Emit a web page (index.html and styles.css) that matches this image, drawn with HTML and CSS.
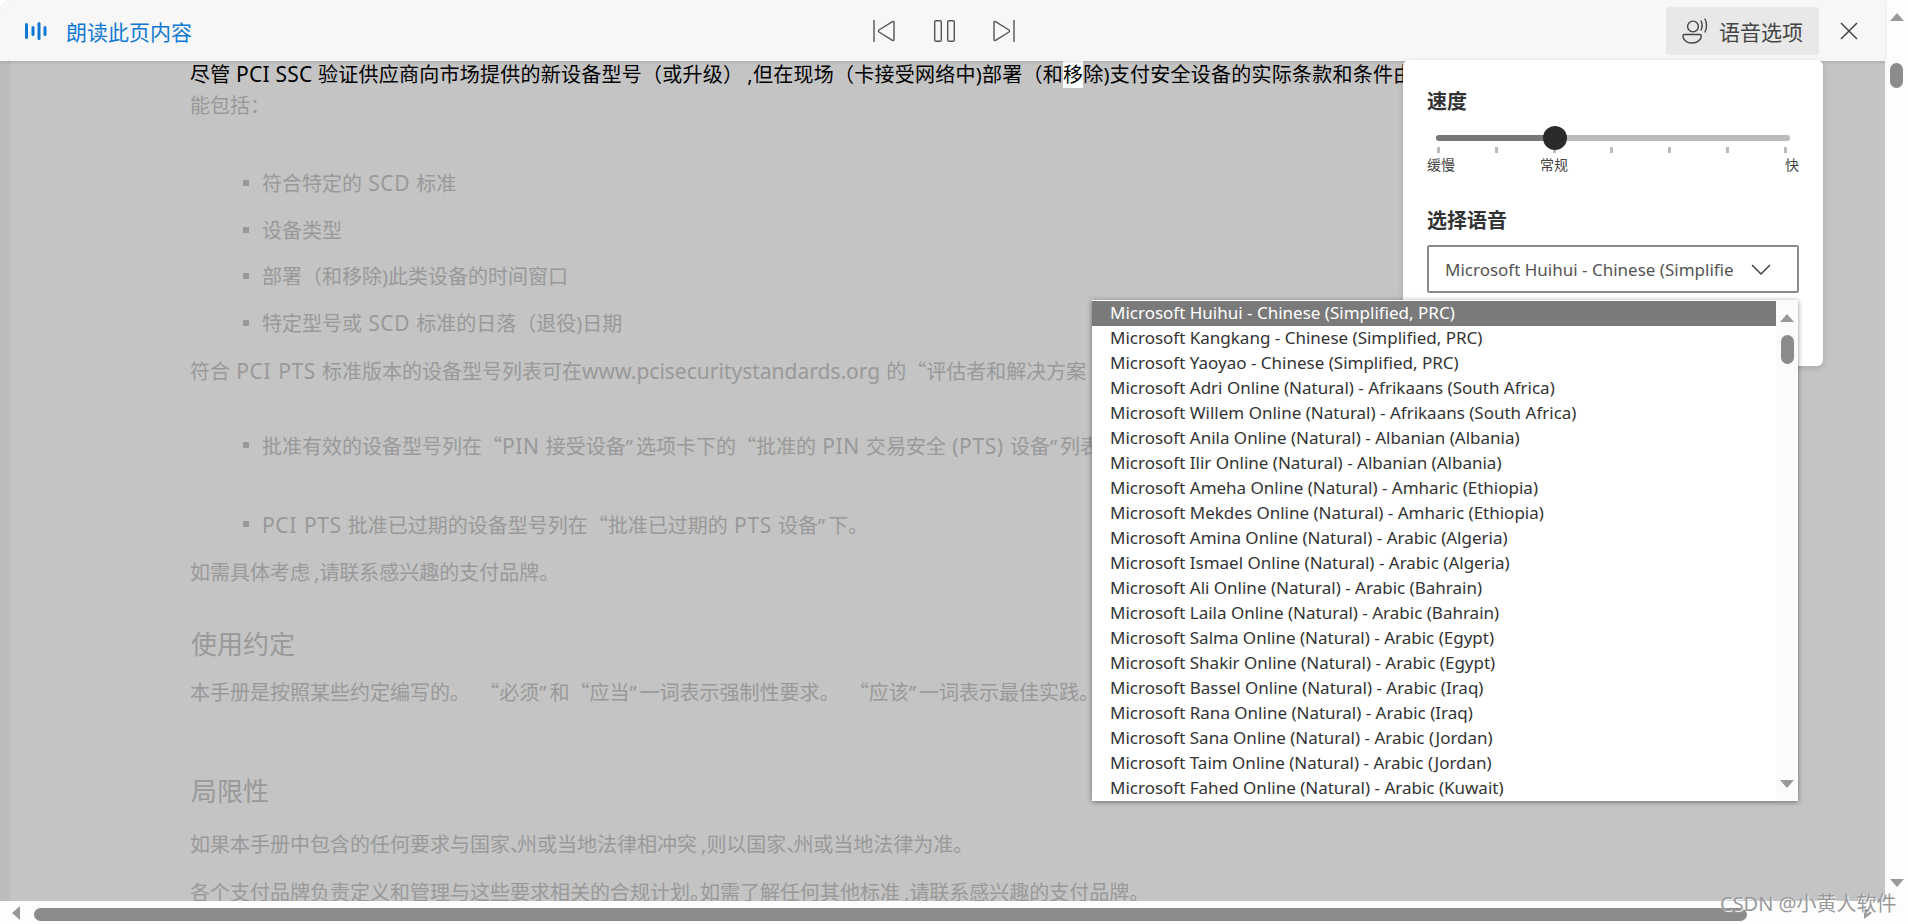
FILE: index.html
```html
<!DOCTYPE html>
<html lang="zh-CN">
<head>
  <meta charset="UTF-8">
  <meta name="viewport" content="width=device-width, initial-scale=1.0">
  <title>朗读此页内容</title>
  <link rel="stylesheet" href="styles.css">
</head>
<body>
  <div class="window">
    <div class="main">
      <header class="toolbar">
        <div class="read-title">
          <svg class="wave-icon" width="22" height="18" viewBox="0 0 22 18">
            <path d="M1.500 2.500v13M8 5.500v7M14 1.500v15M20 5.500v7" fill="none" stroke="#0f78d4" stroke-width="3" stroke-linecap="round"/>
          </svg>
          <span>朗读此页内容</span>
        </div>
        <div class="player">
          <svg width="24" height="24" viewBox="0 0 24 24">
            <path d="M2 1v22M22 3.500v17a1 1 0 0 1-1.600.8L7 13a1.200 1.200 0 0 1 0-2l13.400-8.300a1 1 0 0 1 1.600.8z" fill="none" stroke="#555" stroke-width="1.400"/>
          </svg>
          <svg width="24" height="24" viewBox="0 0 24 24">
            <rect x="2.700" y="1.700" width="6.600" height="20.600" rx="1.400" fill="none" stroke="#555" stroke-width="1.400"/>
            <rect x="15.700" y="1.700" width="6.600" height="20.600" rx="1.400" fill="none" stroke="#555" stroke-width="1.400"/>
          </svg>
          <svg width="24" height="24" viewBox="0 0 24 24">
            <path d="M22 1v22M2 3.500v17a1 1 0 0 0 1.600.8L17 13a1.200 1.200 0 0 0 0-2L3.600 2.700A1 1 0 0 0 2 3.500z" fill="none" stroke="#555" stroke-width="1.400"/>
          </svg>
        </div>
        <div class="tool-right">
          <button class="voice-btn">
            <svg width="26" height="26" viewBox="0 0 26 26">
              <circle cx="11" cy="8.500" r="5.400" fill="none" stroke="#444" stroke-width="1.400"/>
              <path d="M2.500 16.500h15c1 0 1.800.6 1.800 1.500 0 3.800-3.800 7-9.300 7S.9 21.800.9 18c0-.9.600-1.500 1.600-1.500z" fill="none" stroke="#444" stroke-width="1.400"/>
              <path d="M19 3c1.400 2.700 1.400 6.300 0 9M23 1c2 3.700 2 9.300 0 13" fill="none" stroke="#444" stroke-width="1.400" stroke-linecap="round"/>
            </svg>
            <span>语音选项</span>
          </button>
          <svg class="close-icon" width="18" height="18" viewBox="0 0 18 18">
            <path d="M1 1l16 16M17 1L1 17" fill="none" stroke="#444" stroke-width="1.500"/>
          </svg>
        </div>
      </header>

      <div class="page">
        <div class="strip"></div>
        <div class="doc">
          <p class="intro"><span class="reading">尽管 <span class="lat">PCI SSC</span> 验证供应商向市场提供的新设备型号（或升级）<span class="comma">,</span>但在现场（卡接受网络中)部署（和<span class="word">移</span>除)支付安全设备的实际条款和条件由</span><br>能包括：</p>
          <ul class="terms">
            <li>符合特定的 <span class="lat caps">SCD</span> 标准</li>
            <li>设备类型</li>
            <li>部署（和移除)此类设备的时间窗口</li>
            <li>特定型号或 <span class="lat caps">SCD</span> 标准的日落（退役)日期</li>
          </ul>
          <p>符合 <span class="lat caps">PCI PTS</span> 标准版本的设备型号列表可在<span class="lat">www.pcisecuritystandards.org</span> 的<span class="q">“</span>评估者和解决方案</p>
          <ul class="terms single first-single">
            <li>批准有效的设备型号列在<span class="q">“</span><span class="lat caps">PIN</span> 接受设备<span class="rq">”</span>选项卡下的<span class="q">“</span>批准的 <span class="lat caps">PIN</span> 交易安全 <span class="lat caps">(PTS)</span> 设备<span class="rq">”</span>列表</li>
          </ul>
          <ul class="terms single">
            <li><span class="lat caps">PCI PTS</span> 批准已过期的设备型号列在<span class="q">“</span>批准已过期的 <span class="lat caps">PTS</span> 设备<span class="rq">”</span>下。</li>
          </ul>
          <p>如需具体考虑<span class="comma">,</span>请联系感兴趣的支付品牌。</p>
          <h2>使用约定</h2>
          <p class="conv">本手册是按照某些约定编写的。 <span class="q">“</span>必须<span class="rq">”</span>和<span class="q">“</span>应当<span class="rq">”</span>一词表示强制性要求。 <span class="q">“</span>应该<span class="rq">”</span>一词表示最佳实践。</p>
          <h2 class="second">局限性</h2>
          <p>如果本手册中包含的任何要求与国家<span class="half dun">、</span>州或当地法律相冲突<span class="comma">,</span>则以国家<span class="half dun">、</span>州或当地法律为准。</p>
          <p>各个支付品牌负责定义和管理与这些要求相关的合规计划<span class="half">。</span>如需了解任何其他标准<span class="comma">,</span>请联系感兴趣的支付品牌。</p>
        </div>
      </div>

      <div class="hscroll">
        <span class="arrow-left"></span>
        <span class="hthumb"></span>
        <span class="arrow-right"></span>
      </div>
    </div>

    <div class="vscroll">
      <span class="arrow-up"></span>
      <span class="vthumb"></span>
      <span class="arrow-down"></span>
    </div>
  </div>

  <section class="voice-panel">
    <h3>速度</h3>
    <div class="slider">
      <div class="track"><span class="track-fill"></span></div>
      <span class="thumb"></span>
      <div class="ticks"><i></i><i></i><i></i><i></i><i></i><i></i><i></i></div>
    </div>
    <div class="speed-labels">
      <span>缓慢</span>
      <span class="normal">常规</span>
      <span class="fast">快</span>
    </div>
    <h3 class="voice-head">选择语音</h3>
    <div class="select">
      <span class="select-text">Microsoft Huihui - Chinese (Simplifie</span>
      <svg width="20" height="11" viewBox="0 0 20 11">
        <path d="M1 1l9 9 9-9" fill="none" stroke="#444" stroke-width="1.500"/>
      </svg>
    </div>
  </section>

  <div class="voice-list">
    <ul class="options">
      <li class="selected">Microsoft Huihui - Chinese (Simplified, PRC)</li>
      <li>Microsoft Kangkang - Chinese (Simplified, PRC)</li>
      <li>Microsoft Yaoyao - Chinese (Simplified, PRC)</li>
      <li>Microsoft Adri Online (Natural) - Afrikaans (South Africa)</li>
      <li>Microsoft Willem Online (Natural) - Afrikaans (South Africa)</li>
      <li>Microsoft Anila Online (Natural) - Albanian (Albania)</li>
      <li>Microsoft Ilir Online (Natural) - Albanian (Albania)</li>
      <li>Microsoft Ameha Online (Natural) - Amharic (Ethiopia)</li>
      <li>Microsoft Mekdes Online (Natural) - Amharic (Ethiopia)</li>
      <li>Microsoft Amina Online (Natural) - Arabic (Algeria)</li>
      <li>Microsoft Ismael Online (Natural) - Arabic (Algeria)</li>
      <li>Microsoft Ali Online (Natural) - Arabic (Bahrain)</li>
      <li>Microsoft Laila Online (Natural) - Arabic (Bahrain)</li>
      <li>Microsoft Salma Online (Natural) - Arabic (Egypt)</li>
      <li>Microsoft Shakir Online (Natural) - Arabic (Egypt)</li>
      <li>Microsoft Bassel Online (Natural) - Arabic (Iraq)</li>
      <li>Microsoft Rana Online (Natural) - Arabic (Iraq)</li>
      <li>Microsoft Sana Online (Natural) - Arabic (Jordan)</li>
      <li>Microsoft Taim Online (Natural) - Arabic (Jordan)</li>
      <li>Microsoft Fahed Online (Natural) - Arabic (Kuwait)</li>
    </ul>
    <div class="list-scroll">
      <span class="arrow-up"></span>
      <span class="list-thumb"></span>
      <span class="arrow-down"></span>
    </div>
  </div>

  <div class="watermark">CSDN @小黄人软件</div>
</body>
</html>
```

FILE: styles.css
```css
* {
  box-sizing: border-box;
}
html, body {
  height: 100%;
}
body {
  margin: 0;
  background: #fff;
  overflow: hidden;
  font-family: "Noto Sans", "Noto Sans CJK SC", sans-serif;
}
.window {
  display: flex;
  height: 924px;
  border-radius: 10px;
  overflow: hidden;
  background: #fdfdfd;
}
.main {
  flex: 1;
  min-width: 0;
  display: flex;
  flex-direction: column;
}

/* top bar */
.toolbar {
  height: 61px;
  flex: none;
  display: grid;
  grid-template-columns: 1fr auto 1fr;
  align-items: center;
  background: #f7f7f7;
  box-shadow: 0 1px 3px rgba(0, 0, 0, 0.15);
  position: relative;
  z-index: 1;
}
.read-title {
  display: flex;
  align-items: center;
  gap: 19px;
  padding-left: 25px;
  font-size: 21px;
  color: #0f78d4;
}
.player {
  display: flex;
  gap: 36px;
  margin-left: 3px;
}
.tool-right {
  display: flex;
  justify-content: flex-end;
  align-items: center;
  gap: 21px;
  padding-right: 27px;
}
.voice-btn {
  width: 153px;
  height: 48px;
  display: flex;
  align-items: center;
  gap: 11px;
  padding: 0 0 0 16px;
  border: none;
  border-radius: 3px;
  background: #e8e8e8;
  color: #444;
  font-family: inherit;
  font-size: 21px;
}

/* document behind the dim layer */
.page {
  flex: 1;
  min-height: 0;
  display: flex;
  background: #c4c4c4;
}
.strip {
  width: 10px;
  background: #bcbcbc;
}
.doc {
  flex: 1;
  min-width: 0;
  overflow: hidden;
  padding-left: 180px;
  font-size: 20px;
  line-height: 33px;
  word-spacing: 1px;
  color: #999;
  white-space: nowrap;
}
.doc p {
  margin: 0 0 14px;
}
.doc .intro {
  margin: -2px 0 46px;
  line-height: 31px;
}
.doc .conv {
  word-spacing: 4px;
}
.reading {
  color: #000;
  word-spacing: 0;
  letter-spacing: 0.25px;
}
.word {
  background: #fff;
}
.lat {
  font-size: 21px;
}
.caps {
  letter-spacing: 0.6px;
}
.comma {
  padding-left: 4px;
}
.q {
  font-family: "Noto Sans CJK SC", sans-serif;
}
.rq {
  padding-right: 3px;
}
.half {
  font-family: "Noto Sans CJK SC", sans-serif;
  font-feature-settings: "halt";
}
.dun {
  margin-right: -3px;
}
.terms {
  list-style: none;
  margin: 0 0 1px;
  padding: 0 0 0 72px;
}
.terms li {
  position: relative;
  margin-bottom: 13.670px;
}
.terms li::before {
  content: "";
  position: absolute;
  left: -19px;
  top: 13px;
  width: 6px;
  height: 6px;
  background: #999;
}
.terms.single {
  margin-bottom: 2px;
  padding-top: 32px;
}
.terms.first-single {
  margin-bottom: 1px;
  padding-top: 27px;
}
.doc h2 {
  margin: 35px 0 11px;
  padding-left: 1px;
  font-size: 26px;
  font-weight: 400;
  line-height: 40px;
  color: #999;
}
.doc h2.second {
  margin: 62px 0 16px;
}

/* scrollbars */
.hscroll {
  height: 23px;
  flex: none;
  display: flex;
  align-items: center;
  padding-left: 12px;
  background: #fdfdfd;
}
.hthumb {
  width: 1713px;
  height: 13px;
  margin: 3px 117px 0 14px;
  border-radius: 7px;
  background: #8b8b8b;
}
.arrow-left {
  border-style: solid;
  border-width: 7.500px 8px 7.500px 0;
  border-color: transparent #999 transparent transparent;
}
.arrow-right {
  border-style: solid;
  border-width: 6px 0 6px 8px;
  border-color: transparent transparent transparent #999;
}
.vscroll {
  width: 23px;
  flex: none;
  display: flex;
  flex-direction: column;
  align-items: center;
  padding: 13px 0 37px;
  background: #fdfdfd;
}
.arrow-up {
  width: 0;
  border-style: solid;
  border-width: 0 7.500px 8px;
  border-color: transparent transparent #999;
}
.arrow-down {
  width: 0;
  margin-top: auto;
  border-style: solid;
  border-width: 8px 7.500px 0;
  border-color: #999 transparent transparent;
}
.vthumb {
  width: 13px;
  height: 25px;
  margin-top: 42px;
  border-radius: 7px;
  background: #8b8b8b;
}

/* voice options popup */
.voice-panel {
  position: absolute;
  left: 1403px;
  top: 60px;
  width: 420px;
  height: 306px;
  padding: 27px 24px 0;
  background: #fff;
  border-radius: 6px;
  box-shadow: 0 2px 6px rgba(0, 0, 0, 0.15);
  z-index: 2;
  color: #333;
}
.voice-panel h3 {
  margin: 0;
  font-size: 20px;
  font-weight: 700;
  line-height: 30px;
}
.slider {
  position: relative;
  margin: 18px 9px 0;
  height: 18px;
}
.track {
  height: 6px;
  border-radius: 3px;
  background: #bbb;
  overflow: hidden;
}
.track-fill {
  display: block;
  width: 119px;
  height: 6px;
  background: #787878;
}
.thumb {
  position: absolute;
  left: 107px;
  top: -9px;
  width: 24px;
  height: 24px;
  border-radius: 50%;
  background: #2b2b2b;
}
.ticks {
  display: flex;
  justify-content: space-between;
  margin: 6px 3px 0 1px;
}
.ticks i {
  width: 3px;
  height: 6px;
  background: #bbb;
}
.speed-labels {
  display: flex;
  margin-top: 2px;
  font-size: 14px;
  line-height: 20px;
  color: #444;
}
.speed-labels .normal {
  margin-left: 85px;
}
.speed-labels .fast {
  margin-left: auto;
}
.voice-head {
  margin-top: 31px !important;
}
.select {
  height: 48px;
  margin-top: 9px;
  display: flex;
  align-items: center;
  justify-content: space-between;
  padding: 0 26px 0 16px;
  border: 2px solid #8a8a8a;
  border-radius: 2px;
  font-size: 17px;
  color: #555;
}

/* opened select list */
.voice-list {
  position: absolute;
  left: 1092px;
  top: 300px;
  width: 706px;
  height: 501px;
  display: flex;
  background: #fff;
  box-shadow: 0 1px 5px rgba(0, 0, 0, 0.45);
  z-index: 3;
}
.options {
  flex: 1;
  margin: 1px 0 0;
  padding: 0;
  list-style: none;
  font-size: 17px;
  color: #333;
}
.options li {
  height: 25px;
  line-height: 24px;
  padding-left: 18px;
  white-space: nowrap;
}
.options .selected {
  background: #7a7a7a;
  color: #fff;
}
.list-scroll {
  width: 22px;
  display: flex;
  flex-direction: column;
  align-items: center;
  padding: 14px 0 13px;
  background: #fbfbfb;
}
.list-thumb {
  width: 13px;
  height: 29px;
  margin-top: 13px;
  border-radius: 7px;
  background: #8b8b8b;
}

.watermark {
  position: absolute;
  left: 1720px;
  top: 890px;
  font-size: 20px;
  line-height: 28px;
  color: #999;
  text-shadow: 1px 1px 1px #fff;
  white-space: nowrap;
  z-index: 4;
}
```
